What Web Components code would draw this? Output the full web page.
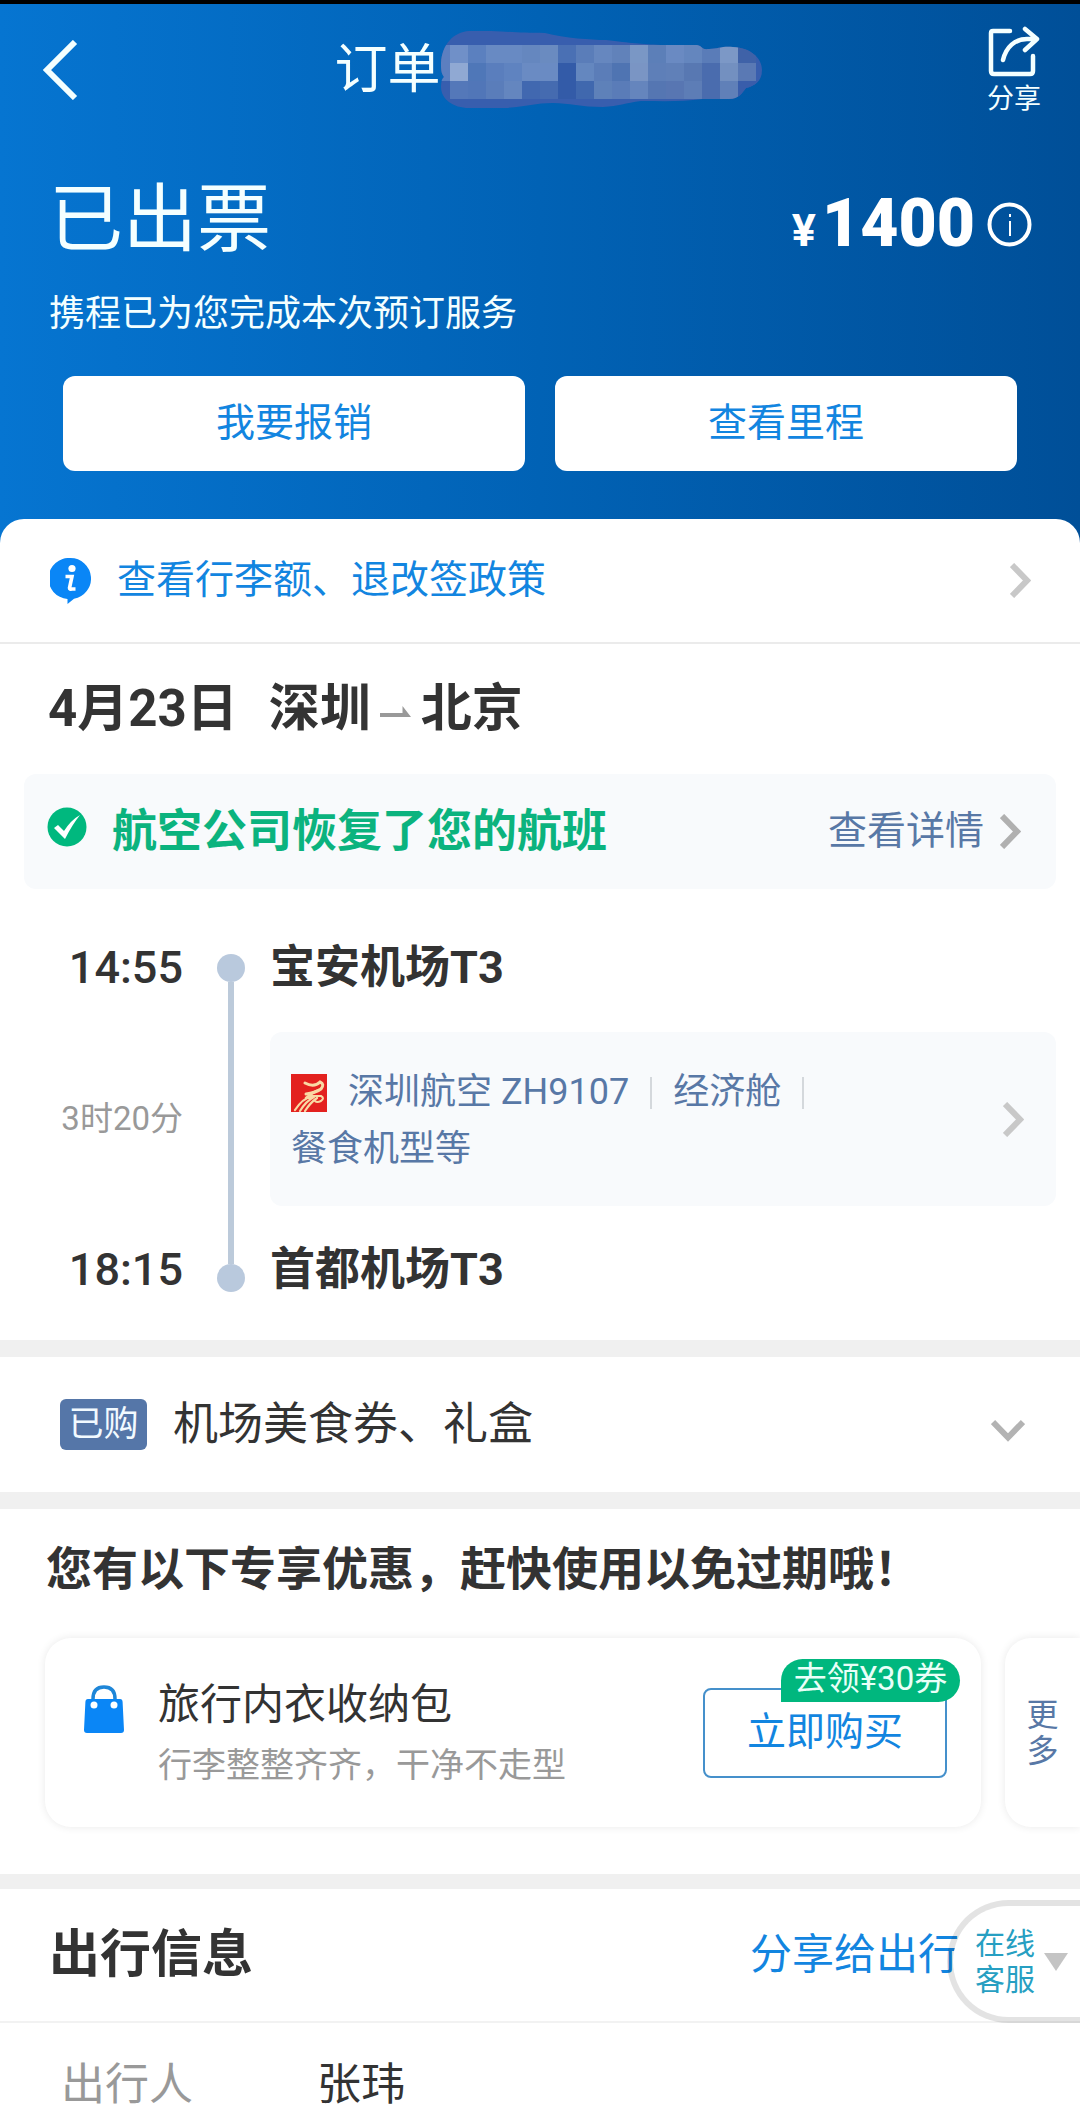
<!DOCTYPE html>
<html lang="zh-CN">
<head>
<meta charset="utf-8">
<meta name="viewport" content="width=device-width, initial-scale=1">
<title>订单详情</title>
<style>
  :root {
    --ink: #333;
    --muted: #999;
    --link: #1285e0;
    --slate: #5878a6;
    --green: #0bb37e;
    --panel: #f8fafc;
    --band: #f0f0f0;
  }
  body {
    margin: 0;
    background: #fff;
    color: var(--ink);
    font-family: Roboto, "Noto Sans CJK SC", sans-serif;
    line-height: 1.2;
  }
</style>
</head>
<body>
<order-page>
  <order-header state="已出票" note="携程已为您完成本次预订服务" amount="1400">
    <action-button>我要报销</action-button>
    <action-button>查看里程</action-button>
  </order-header>
  <order-sheet>
    <policy-link>查看行李额、退改签政策</policy-link>
    <flight-segment date="4月23日" from="深圳" to="北京">
      <flight-alert slot="alert" action="查看详情">航空公司恢复了您的航班</flight-alert>
      <flight-timeline depart="14:55" arrive="18:15" duration="3时20分" origin="宝安机场T3" target="首都机场T3">
        <flight-info flight="深圳航空 ZH9107" cabin="经济舱">餐食机型等</flight-info>
      </flight-timeline>
    </flight-segment>
    <addon-row tag="已购">机场美食券、礼盒</addon-row>
    <promo-section heading="您有以下专享优惠，赶快使用以免过期哦！">
      <promo-card name="旅行内衣收纳包" detail="行李整整齐齐，干净不走型" action="立即购买" coupon="去领¥30券"></promo-card>
      <more-card>更多</more-card>
    </promo-section>
    <travel-section heading="出行信息" action="分享给出行">
      <info-row label="出行人">张玮</info-row>
      <support-float slot="float">在线客服</support-float>
    </travel-section>
  </order-sheet>
</order-page>

<script>
const BASE = `
  *, *::before, *::after { box-sizing: border-box; }
  :host { display: block; }
  button { font: inherit; color: inherit; background: none; border: 0; padding: 0; margin: 0; cursor: pointer; }
  a { color: inherit; text-decoration: none; }
  h1, h2, p, dl, dt, dd { margin: 0; font: inherit; }
  svg { display: block; flex: none; }
`;

function define(name, css, render) {
  customElements.define(name, class extends HTMLElement {
    connectedCallback() {
      if (this.shadowRoot) return;
      const root = this.attachShadow({ mode: 'open' });
      root.innerHTML = '<style>' + BASE + css + '</style>' + render(key => this.getAttribute(key) || '');
    }
  });
}

define('chevron-icon', `
  :host { flex: none; color: #c8c8c8; }
`, () => `
  <svg width="21" height="35" viewBox="0 0 21 35" fill="none" stroke="currentColor" stroke-width="6"><path d="M2 2l15 15.500L2 33"/></svg>
`);

/* Pixelated cover over the order number */
const CELLS = [
  ['7090c8','5b80bf','688ac3','688ac3','6587bf','6a8bc0','4a70b4','5a7db9','6687bf','6182ba','7a97c5','5c7fb8','6a8ac2','6486be','5a7cb8','7c98c6','3f62a8'],
  ['90a9d3','4f77b8','5a7ebd','5f83c0','6a8bc3','6a8bc3','335ba8','6487bf','5b7db8','4f74b2','7a95c4','5e7fb8','6080b8','5878b2','4a6cae','7390c0','5a79b4'],
  ['5478b9','5176b8','5a7dba','6486bf','4168b0','456bb0','335ba8','4068ae','5e81b9','5a7cb8','6585bd','5576b2','5876b2','5d7db6','4a6cae','6080b8','395dab']
];
define('number-mask', '', () => `
  <svg width="321" height="78" viewBox="0 0 321 78" aria-hidden="true">
    <defs><clipPath id="blob"><path d="M0 32C1 14 12 1 28 0H50C72 1 82 2 104 2C124 7 150 9 165 9C190 12 200 13 220 14H256C262 15 260 19 268 18C278 18 280 15 292 16C310 17 321 27 321 39C321 51 313 55 305 57C301 62 298 68 288 68H262C240 71 220 70 200 70C184 72 178 75 162 76C140 76 128 72 112 72C94 72 84 76 64 77H28C12 77 0 68 0 56C0 50 1 48 3 46C0 42 0 38 0 32Z"/></clipPath></defs>
    <g clip-path="url(#blob)" shape-rendering="crispEdges">
      <rect width="321" height="78" fill="#385eae"/>
      <rect y="14" width="9" height="36" fill="#5c7fc0"/>
      ${CELLS.map((row, r) => row.map((c, i) => `<rect x="${9 + i * 18}" y="${14 + r * 18}" width="18" height="18" fill="#${c}"/>`).join('')).join('')}
    </g>
  </svg>
`);

define('order-page', '', () => `<main><slot></slot></main>`);

define('order-header', `
  header {
    border-top: 4px solid #000;
    padding: 22px 0 72px;
    color: #f4ffff;
    background: linear-gradient(90deg, #0675d1, #0162b5 50%, #004f98);
  }
  .bar { display: grid; grid-template-columns: 1fr auto 1fr; align-items: center; padding: 0 26px 0 42px; }
  .title { display: flex; align-items: center; font-size: 53px; line-height: 78px; }
  .share { justify-self: end; width: 80px; font-size: 27px; line-height: 30px; }
  .share svg { margin: 0 auto 6px; }
  .status { display: flex; justify-content: space-between; align-items: center; height: 84px; padding: 0 48px 0 49px; margin-top: 64px; }
  .status h2 { font-size: 74px; line-height: 84px; }
  .price { display: flex; align-items: center; gap: 12px; color: #fff; font-weight: 700; }
  .sum { display: flex; align-items: baseline; gap: 6px; height: 84px; padding-top: 4px; font-size: 66px; line-height: 84px; }
  .sum span { font-size: 45px; }
  .note { padding: 0 49px; margin-top: 28px; font-size: 36px; line-height: 48px; }
  .actions { display: flex; gap: 30px; padding: 0 63px; margin-top: 38px; }
`, a => `
  <header>
    <div class="bar">
      <button aria-label="返回"><svg width="36" height="60" viewBox="0 0 36 60" fill="none" stroke="currentColor" stroke-width="6"><path d="M33 2L5 30l28 28"/></svg></button>
      <h1 class="title">订单<number-mask></number-mask></h1>
      <button class="share">
        <svg width="52" height="52" viewBox="0 0 52 52" fill="none" stroke="currentColor" stroke-width="4.500" stroke-linecap="round" stroke-linejoin="round"><path d="M22 5H5Q3 5 3 7V45Q3 48 6 48H42Q45 48 45 45V30"/><path d="M15 34C18 21 27 13 39 13H48M37 3L49 13L37 24"/></svg>
        分享
      </button>
    </div>
    <div class="status">
      <h2>${a('state')}</h2>
      <div class="price">
        <div class="sum"><span>¥</span><b>${a('amount')}</b></div>
        <button aria-label="价格说明"><svg width="45" height="53" viewBox="0 0 45 53" fill="none" stroke="currentColor"><circle cx="22.500" cy="30.500" r="20" stroke-width="4"/><path d="M23 27v15M23 20v3" stroke-width="2"/></svg></button>
      </div>
    </div>
    <p class="note">${a('note')}</p>
    <div class="actions"><slot></slot></div>
  </header>
`);

define('action-button', `
  :host { flex: 1; }
  button { display: block; width: 100%; height: 95px; border-radius: 12px; background: #fff; color: var(--link); font-size: 39px; }
`, () => `<button><slot></slot></button>`);

define('order-sheet', `
  :host { position: relative; margin-top: -24px; background: #fff; border-radius: 24px 24px 0 0; }
`, () => `<slot></slot>`);

define('policy-link', `
  a { display: flex; align-items: center; height: 125px; padding: 0 49px 0 50px; border-bottom: 2px solid #ebebeb; color: var(--link); font-size: 39px; }
  span { flex: 1; padding-left: 26px; }
`, () => `
  <a href="#policy">
    <svg width="41" height="46" viewBox="0 0 41 46"><path d="M20.500 0A20.500 20.500 0 0 1 24 40.700L17.500 46V41A20.500 20.500 0 0 1 20.500 0Z" fill="#0a86f6"/><circle cx="22" cy="10.500" r="3.600" fill="#fff"/><path d="M15.500 18.500H22L19.500 30Q19.500 31.500 22 31H25.500" fill="none" stroke="#fff" stroke-width="3.600"/></svg>
    <span><slot></slot></span>
    <chevron-icon></chevron-icon>
  </a>
`);

define('flight-segment', `
  section { padding: 35px 24px 40px; border-bottom: 17px solid var(--band); }
  h2 { display: flex; align-items: center; padding: 0 24px; margin-bottom: 35px; font-size: 51px; line-height: 60px; font-weight: 700; }
  .from { margin-left: 31px; }
  svg { margin: 0 9px; }
`, a => `
  <section>
    <h2>${a('date')}<span class="from">${a('from')}</span><svg width="32" height="18" viewBox="0 0 32 18" fill="#999"><path d="M0 13H22.500V6L31 17H0Z"/></svg>${a('to')}</h2>
    <slot name="alert"></slot>
    <slot></slot>
  </section>
`);

define('flight-alert', `
  div { display: flex; align-items: center; height: 115px; padding: 0 35px 0 23px; border-radius: 12px; background: var(--panel); }
  strong { flex: 1; padding-left: 25px; color: var(--green); font-size: 45px; line-height: 60px; }
  a { display: flex; align-items: center; gap: 16px; color: var(--slate); font-size: 39px; }
  chevron-icon { color: #b0b0b0; }
`, a => `
  <div>
    <svg width="40" height="50" viewBox="0 0 40 50"><circle cx="20" cy="20" r="19.500" fill="#00b87e"/><path d="M7 21L11 18L17 24Q24 13 33 8Q25 18 18 32Z" fill="#fff"/></svg>
    <strong><slot></slot></strong>
    <a href="#detail">${a('action')}<chevron-icon></chevron-icon></a>
  </div>
`);

define('flight-timeline', `
  .grid { display: grid; grid-template-columns: 168px 28px 1fr; column-gap: 25px; row-gap: 34px; padding-top: 49px; align-items: center; }
  .time, .span { justify-self: end; padding-right: 9px; }
  .time { font-size: 45px; line-height: 60px; font-weight: 500; }
  .span { color: var(--muted); font-size: 33px; line-height: 40px; }
  .place { font-size: 45px; line-height: 60px; font-weight: 700; }
  .rail { grid-column: 2; grid-row: 1 / 4; align-self: stretch; display: flex; flex-direction: column; align-items: center; padding: 16px 0 8px; }
  .rail i { width: 28px; height: 28px; border-radius: 50%; background: #b9c9dd; }
  .rail b { flex: 1; width: 6px; background: #bccada; }
`, a => `
  <div class="grid">
    <div class="rail"><i></i><b></b><i></i></div>
    <time class="time">${a('depart')}</time><div class="place">${a('origin')}</div>
    <div class="span">${a('duration')}</div><slot></slot>
    <time class="time">${a('arrive')}</time><div class="place">${a('target')}</div>
  </div>
`);

define('flight-info', `
  a { display: flex; align-items: center; justify-content: space-between; height: 174px; padding: 0 32px 0 21px; border-radius: 12px; background: var(--panel); color: var(--slate); font-size: 36px; line-height: 57px; }
  .body { padding-top: 4px; }
  .line { display: flex; align-items: center; }
  .line span { padding: 0 21px; }
  i { width: 2px; height: 32px; background: #d4d8dc; }
`, a => `
  <a href="#flight">
    <div class="body">
      <div class="line">
        <svg width="36" height="38" viewBox="0 0 36 38"><rect width="36" height="38" fill="#e3211f"/><g fill="none" stroke="#f9d9a4" stroke-linecap="round"><path d="M14 9Q23 14 29 8Q34 10 30 15Q24 19 15 20" stroke-width="3"/><path d="M28 16Q22 18 15 24" stroke-width="2.500"/><path d="M4 36Q12 24 20 23M9 37Q15 27 23 23M14 37Q19 29 26 24" stroke-width="2.200"/><path d="M19 22H30Q34 24 30 27Q26 29 24 27" stroke-width="2"/></g></svg>
        <span>${a('flight')}</span><i></i><span>${a('cabin')}</span><i></i>
      </div>
      <div><slot></slot></div>
    </div>
    <chevron-icon></chevron-icon>
  </a>
`);

define('addon-row', `
  button { display: flex; align-items: center; width: 100%; height: 152px; padding: 0 55px 0 60px; border-bottom: 17px solid var(--band); font-size: 45px; text-align: left; }
  .tag { width: 87px; height: 51px; border-radius: 6px; background: #5576a8; color: #f2faff; font-size: 35px; line-height: 51px; text-align: center; }
  .text { flex: 1; padding-left: 26px; }
`, a => `
  <button aria-expanded="false">
    <span class="tag">${a('tag')}</span>
    <span class="text"><slot></slot></span>
    <svg width="34" height="35" viewBox="0 0 34 35" fill="none" stroke="#b3b3b3" stroke-width="6"><path d="M2 15L17 30.500L32 15"/></svg>
  </button>
`);

define('promo-section', `
  section { overflow: hidden; padding: 30px 0 47px; border-bottom: 15px solid var(--band); }
  h2 { padding: 0 46px; font-size: 46px; line-height: 60px; font-weight: 700; }
  .cards { display: flex; gap: 24px; padding-left: 45px; margin-top: 39px; }
`, a => `
  <section>
    <h2>${a('heading')}</h2>
    <div class="cards"><slot></slot></div>
  </section>
`);

const CARD = `box-shadow: 0 0 8px rgba(0, 0, 0, .09); background: #fff;`;

define('promo-card', `
  :host { flex: 1; }
  article { display: flex; align-items: center; height: 189px; padding: 0 34px 0 39px; border-radius: 26px; ${CARD} }
  .text { flex: 1; padding-left: 34px; }
  h3 { margin: 0 0 12px; font-size: 42px; line-height: 52px; font-weight: 400; }
  p { color: var(--muted); font-size: 34px; line-height: 44px; }
  .bag { align-self: flex-start; margin-top: 46px; }
  button { position: relative; width: 244px; height: 90px; border: 2px solid #4590cb; border-radius: 8px; color: var(--link); font-size: 39px; }
  .coupon { position: absolute; right: -15px; top: -31px; width: 179px; height: 43px; border-radius: 22px 22px 22px 0; background: #00b77e; color: #e9fff8; font-size: 33px; line-height: 40px; text-align: center; }
`, a => `
  <article>
    <svg class="bag" width="40" height="50" viewBox="0 0 40 50"><path d="M9 20V15Q9 3 20 3T31 15V20" fill="none" stroke="#1e86d8" stroke-width="3.500"/><path d="M4 15H36Q38.500 15 38.600 18L40 46Q40 49 37 49H3Q0 49 0 46L1.400 18Q1.500 15 4 15Z" fill="#0a86f6"/><circle cx="10" cy="21" r="3.500" fill="#fff"/><circle cx="30" cy="21" r="3.500" fill="#fff"/></svg>
    <div class="text"><h3>${a('name')}</h3><p>${a('detail')}</p></div>
    <button>${a('action')}<span class="coupon">${a('coupon')}</span></button>
  </article>
`);

define('more-card', `
  :host { flex: none; width: 75px; }
  button { display: flex; align-items: center; justify-content: center; width: 100%; height: 189px; border-radius: 26px 0 0 26px; ${CARD} color: var(--slate); font-size: 32px; line-height: 36px; }
  span { width: 32px; }
`, () => `<button><span><slot></slot></span></button>`);

define('travel-section', `
  section { position: relative; }
  .head { display: flex; align-items: center; justify-content: space-between; height: 134px; padding: 0 120px 0 49px; border-bottom: 2px solid #f2f2f2; }
  h2 { font-size: 51px; font-weight: 700; }
  a { color: var(--link); font-size: 42px; }
`, a => `
  <section>
    <div class="head"><h2>${a('heading')}</h2><a href="#share">${a('action')}</a></div>
    <slot></slot>
    <slot name="float"></slot>
  </section>
`);

define('info-row', `
  dl { display: flex; padding: 34px 61px 4px; font-size: 44px; line-height: 56px; }
  dt { width: 256px; color: var(--muted); }
`, a => `<dl><dt>${a('label')}</dt><dd><slot></slot></dd></dl>`);

/* Customer service tab, floats over the right edge of the section */
define('support-float', `
  :host { position: absolute; top: 11px; right: 0; }
  button { display: flex; align-items: center; gap: 9px; width: 133px; height: 123px; padding: 0 0 0 22px; border: 6px solid rgba(0, 0, 0, .11); border-right: 0; border-radius: 62px 0 0 62px; background: #fff; background-clip: padding-box; color: #279fc2; font-size: 30px; line-height: 36px; }
  span { width: 60px; }
`, () => `
  <button><span><slot></slot></span><svg width="24" height="18" viewBox="0 0 24 18" fill="#c4c4c4"><path d="M0 0H24L12 18Z"/></svg></button>
`);
</script>
</body>
</html>
